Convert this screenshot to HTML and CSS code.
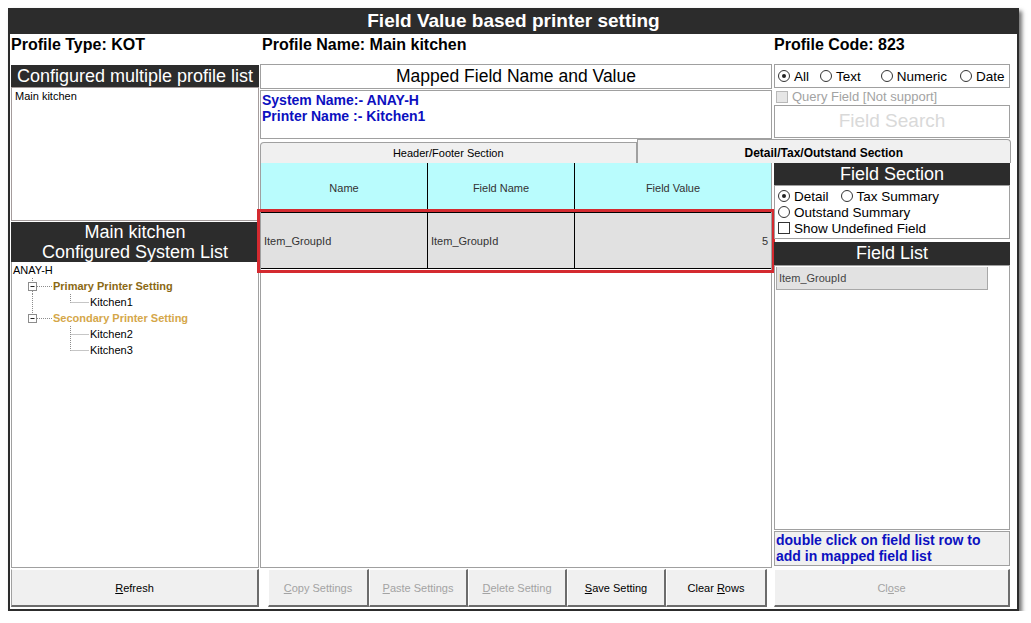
FILE: index.html
```html
<!DOCTYPE html>
<html lang="en">
<head>
    <meta charset="UTF-8">
    <title>Field Value based printer setting</title>
    <link rel="stylesheet" href="styles.css">
</head>
<body>
    <div class="window">
        <div class="titlebar">Field Value based printer setting</div>

        <div class="profile-row">
            <div class="profile-type">Profile Type: KOT</div>
            <div class="profile-name">Profile Name: Main kitchen</div>
            <div class="profile-code">Profile Code: 823</div>
        </div>

        <div class="main">
            <!-- left column: profiles and system tree -->
            <div class="left-col">
                <div class="dark-head">Configured multiple profile list</div>
                <div class="profile-list">
                    <div class="list-item">Main kitchen</div>
                </div>
                <div class="dark-head tall">Main kitchen<br>Configured System List</div>
                <div class="tree">
                    <div class="tree-row root">ANAY-H</div>
                    <div class="tree-row">
                        <svg width="41" height="16" viewBox="0 0 41 16">
                            <path class="dots" d="M20.5 0V4M20.5 13V16M25 8.5H40"/>
                            <rect class="box" x="16.5" y="4.5" width="8" height="8"/>
                            <path class="minus" d="M18.5 8.5H22.5"/>
                        </svg>
                        <span class="node primary">Primary Printer Setting</span>
                    </div>
                    <div class="tree-row">
                        <svg width="78" height="16" viewBox="0 0 78 16">
                            <path class="dots" d="M20.5 0V16M58.5 0V8.5M58.5 8.5H77"/>
                        </svg>
                        <span class="node">Kitchen1</span>
                    </div>
                    <div class="tree-row">
                        <svg width="41" height="16" viewBox="0 0 41 16">
                            <path class="dots" d="M20.5 0V4M25 8.5H40"/>
                            <rect class="box" x="16.5" y="4.5" width="8" height="8"/>
                            <path class="minus" d="M18.5 8.5H22.5"/>
                        </svg>
                        <span class="node secondary">Secondary Printer Setting</span>
                    </div>
                    <div class="tree-row">
                        <svg width="78" height="16" viewBox="0 0 78 16">
                            <path class="dots" d="M58.5 0V16M58.5 8.5H77"/>
                        </svg>
                        <span class="node">Kitchen2</span>
                    </div>
                    <div class="tree-row">
                        <svg width="78" height="16" viewBox="0 0 78 16">
                            <path class="dots" d="M58.5 0V8.5M58.5 8.5H77"/>
                        </svg>
                        <span class="node">Kitchen3</span>
                    </div>
                </div>
                <button class="btn btn-wide"><u>R</u>efresh</button>
            </div>

            <!-- work area: mapping grid and field lists -->
            <div class="work">
                <div class="upper">
                    <div class="upper-mid">
                        <div class="mapped-title">Mapped Field Name and Value</div>
                        <div class="sys-info">System Name:- ANAY-H<br>Printer Name :- Kitchen1</div>
                    </div>
                    <div class="upper-right">
                        <div class="type-filter">
                            <label class="opt"><span class="radio checked"></span>All</label>
                            <label class="opt"><span class="radio"></span>Text</label>
                            <label class="opt"><span class="radio"></span>Numeric</label>
                            <label class="opt"><span class="radio"></span>Date</label>
                        </div>
                        <label class="query"><span class="check disabled"></span>Query Field [Not support]</label>
                        <div class="search">Field Search</div>
                    </div>
                </div>

                <div class="tabs">
                    <div class="tab">Header/Footer Section</div>
                    <div class="tab active">Detail/Tax/Outstand Section</div>
                </div>

                <div class="page">
                    <div class="grid">
                        <div class="grid-head">
                            <div class="cell c-name">Name</div>
                            <div class="cell c-field">Field Name</div>
                            <div class="cell c-value">Field Value</div>
                        </div>
                        <div class="grid-row selected">
                            <div class="cell c-name">Item_GroupId</div>
                            <div class="cell c-field">Item_GroupId</div>
                            <div class="cell c-value num">5</div>
                        </div>
                    </div>

                    <div class="side">
                        <div class="dark-head">Field Section</div>
                        <div class="section-opts">
                            <div class="opt-line">
                                <label class="opt"><span class="radio checked"></span>Detail</label>
                                <label class="opt"><span class="radio"></span>Tax Summary</label>
                            </div>
                            <div class="opt-line">
                                <label class="opt"><span class="radio"></span>Outstand Summary</label>
                            </div>
                            <div class="opt-line">
                                <label class="opt"><span class="check"></span>Show Undefined Field</label>
                            </div>
                        </div>
                        <div class="dark-head list-head">Field List</div>
                        <div class="field-list">
                            <div class="field-item">Item_GroupId</div>
                        </div>
                        <div class="hint">double click on field list row to<br>add in mapped field list</div>
                    </div>
                </div>

                <div class="actions">
                    <div class="action-group">
                        <button class="btn w101" disabled><u>C</u>opy Settings</button>
                        <button class="btn w99" disabled><u>P</u>aste Settings</button>
                        <button class="btn w99" disabled><u>D</u>elete Setting</button>
                        <button class="btn w99"><u>S</u>ave Setting</button>
                        <button class="btn w101">Clear <u>R</u>ows</button>
                    </div>
                    <button class="btn btn-close" disabled>Cl<u>o</u>se</button>
                </div>
            </div>
        </div>
    </div>
</body>
</html>
```

FILE: styles.css
```css
* {
    margin: 0;
    padding: 0;
    box-sizing: border-box;
}

body {
    font-family: "Liberation Sans", Arial, sans-serif;
    background: #fff;
    color: #000;
}

.window {
    margin: 8px 0 0 8px;
    width: 1011px;
    height: 603px;
    border: 2px solid #2c2c2c;
    background: #fff;
    box-shadow: 3px 3px 4px rgba(0, 0, 0, 0.55);
    display: flex;
    flex-direction: column;
}

.titlebar {
    height: 24px;
    background: #2c2c2c;
    color: #fff;
    font-size: 19px;
    font-weight: bold;
    line-height: 22px;
    text-align: center;
}

.profile-row {
    height: 29px;
    display: flex;
    padding-left: 1px;
    font-size: 16px;
    font-weight: bold;
    line-height: 22px;
}

.profile-type {
    width: 251px;
}

.profile-name {
    width: 512px;
}

.main {
    flex: 1;
    display: flex;
    padding-left: 1px;
    padding-bottom: 2px;
}

/* left column */
.left-col {
    width: 248px;
    margin-right: 1px;
    display: flex;
    flex-direction: column;
}

.dark-head {
    height: 22px;
    margin-top: 2px;
    background: #2c2c2c;
    color: #fff;
    font-size: 18px;
    line-height: 22px;
    text-align: center;
    white-space: nowrap;
}

.dark-head.tall {
    height: 40px;
    margin-top: 1px;
    line-height: 20px;
}

.profile-list {
    height: 134px;
    border: 1px solid #a49c9c;
    padding: 2px 3px;
}

.list-item {
    font-size: 11px;
}

.tree {
    flex: 1;
    border: 1px solid #a0a0a0;
    border-top: none;
    font-size: 11px;
}

.tree-row {
    height: 16px;
    display: flex;
    align-items: center;
}

.tree-row.root {
    padding-left: 1px;
}

.tree-row svg {
    display: block;
    flex: none;
}

.dots {
    fill: none;
    stroke: #8c8c8c;
    stroke-dasharray: 1 1;
}

.box {
    fill: #fff;
    stroke: #8c8c8c;
}

.minus {
    stroke: #222;
}

.node.primary {
    color: #8b6914;
    font-weight: bold;
}

.node.secondary {
    color: #d5a74a;
    font-weight: bold;
}

/* buttons */
.btn {
    height: 38px;
    margin-top: 1px;
    background: #f0f0f0;
    border-top: 1px solid #fff;
    border-left: 1px solid #fff;
    border-right: 2px solid #6c6c6c;
    border-bottom: 2px solid #6c6c6c;
    font-family: inherit;
    font-size: 11px;
    color: #000;
}

.btn:disabled {
    color: #a3a3a3;
}

.btn-wide {
    width: 248px;
    border-left-color: #a0a0a0;
}

/* work area */
.work {
    width: 751px;
    display: flex;
    flex-direction: column;
}

.upper {
    display: flex;
    gap: 2px;
    height: 76px;
}

.upper-mid {
    width: 512px;
}

.mapped-title {
    height: 25px;
    margin-top: 1px;
    border: 1px solid #a0a0a0;
    font-size: 17.5px;
    line-height: 23px;
    text-align: center;
}

.sys-info {
    height: 49px;
    margin-top: 1px;
    border: 1px solid #a0a0a0;
    padding: 1px 1px;
    color: #0c10c0;
    font-size: 14px;
    font-weight: bold;
    line-height: 16px;
}

.upper-right {
    width: 236px;
}

.type-filter {
    height: 24px;
    margin-top: 1px;
    border: 1px solid #a0a0a0;
    display: flex;
    align-items: center;
    padding-left: 3px;
    gap: 11px;
    font-size: 13.5px;
}

.type-filter .opt:nth-child(3) {
    margin-left: 9px;
}

.type-filter .opt:nth-child(4) {
    margin-left: 2px;
}

.opt {
    display: flex;
    align-items: center;
    gap: 4px;
}

.radio {
    width: 12px;
    height: 12px;
    border: 1.5px solid #333;
    border-radius: 50%;
    display: flex;
    align-items: center;
    justify-content: center;
}

.radio.checked::after {
    content: "";
    width: 4px;
    height: 4px;
    border-radius: 50%;
    background: #222;
}

.check {
    width: 12px;
    height: 12px;
    border: 1.5px solid #333;
    background: #fff;
}

.check.disabled {
    border-color: #b8b8b8;
    background: #e6e6e6;
}

.query {
    height: 17px;
    display: flex;
    align-items: center;
    gap: 4px;
    padding-left: 2px;
    color: #a3a3a3;
    font-size: 13px;
}

.search {
    height: 33px;
    border: 1px solid #a0a0a0;
    color: #d9d9d9;
    font-size: 19px;
    line-height: 30px;
    text-align: center;
}

/* tabs */
.tabs {
    height: 24px;
    display: flex;
    align-items: flex-end;
}

.tab {
    width: 377px;
    height: 21px;
    border: 1px solid #a0a0a0;
    border-bottom: none;
    border-radius: 4px 0 0 0;
    background: #f0f0f0;
    font-size: 11px;
    line-height: 20px;
    text-align: center;
}

.tab.active {
    width: 375px;
    height: 24px;
    border-radius: 0 4px 0 0;
    font-size: 12px;
    font-weight: bold;
    line-height: 26px;
}

/* tab page */
.page {
    flex: 1;
    display: flex;
    gap: 2px;
}

.grid {
    width: 512px;
    border: 1px solid #a0a0a0;
    border-top: none;
    background: #fff;
}

.grid-head,
.grid-row {
    display: flex;
    border-bottom: 1px solid #000;
}

.grid-head {
    height: 50px;
    background: #b9fcfd;
}

.grid-row {
    height: 56px;
    background: #e1e1e1;
}

.grid-row.selected {
    outline: 3px solid #d42a30;
    outline-offset: 1px;
}

.cell {
    display: flex;
    align-items: center;
    padding: 0 3px;
    font-size: 11px;
    color: #333;
    border-right: 1px solid #000;
}

.grid-head .cell {
    justify-content: center;
}

.c-name {
    width: 167px;
}

.c-field {
    width: 147px;
}

.c-value {
    width: 196px;
    border-right: none;
}

.cell.num {
    justify-content: flex-end;
}

.side {
    width: 236px;
    display: flex;
    flex-direction: column;
    padding-bottom: 2px;
}

.side .dark-head {
    margin-top: 0;
}

.side .list-head {
    height: 23px;
    margin-top: 3px;
}

.section-opts {
    height: 54px;
    border: 1px solid #a0a0a0;
    padding: 2px 0 0 3px;
    font-size: 13.5px;
}

.opt-line {
    height: 16px;
    display: flex;
    gap: 12px;
}

.field-list {
    flex: 1;
    border: 1px solid #a0a0a0;
    padding: 1px 0 0 1px;
}

.field-item {
    width: 212px;
    height: 23px;
    background: #e2e2e2;
    border: 1px solid #a8a8a8;
    border-top: none;
    padding-left: 2px;
    font-size: 11px;
    line-height: 22px;
    color: #444;
}

.hint {
    height: 35px;
    margin-top: 1px;
    border: 1px solid #a0a0a0;
    background: #f0f0f0;
    padding: 0 1px;
    color: #0c10c0;
    font-size: 14px;
    font-weight: bold;
    line-height: 16px;
}

/* button row */
.actions {
    display: flex;
}

.action-group {
    display: flex;
    padding-left: 8px;
}

.w101 {
    width: 101px;
}

.w99 {
    width: 99px;
}

.btn-close {
    width: 236px;
    margin-left: 7px;
}
```
